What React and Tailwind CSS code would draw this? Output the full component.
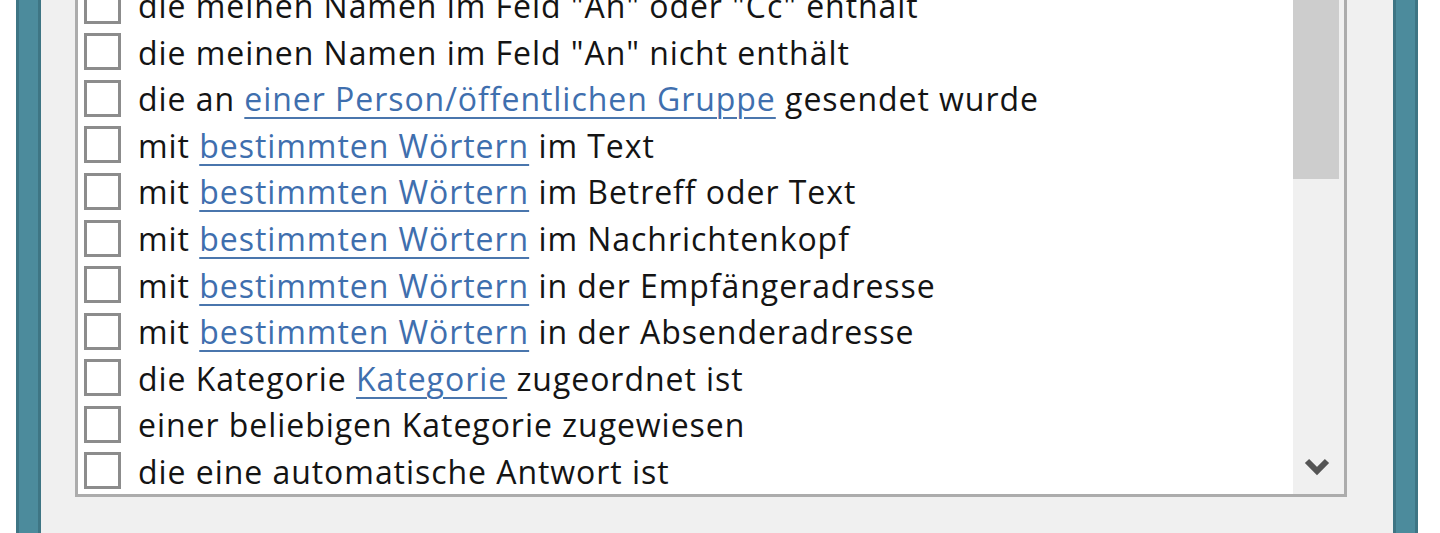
import React from 'react';

const rows = [
  [{ t: 'die meinen Namen im Feld "An" oder "Cc" enthält' }],
  [{ t: 'die meinen Namen im Feld "An" nicht enthält' }],
  [{ t: 'die an ' }, { t: 'einer Person/öffentlichen Gruppe', link: true }, { t: ' gesendet wurde' }],
  [{ t: 'mit ' }, { t: 'bestimmten Wörtern', link: true }, { t: ' im Text' }],
  [{ t: 'mit ' }, { t: 'bestimmten Wörtern', link: true }, { t: ' im Betreff oder Text' }],
  [{ t: 'mit ' }, { t: 'bestimmten Wörtern', link: true }, { t: ' im Nachrichtenkopf' }],
  [{ t: 'mit ' }, { t: 'bestimmten Wörtern', link: true }, { t: ' in der Empfängeradresse' }],
  [{ t: 'mit ' }, { t: 'bestimmten Wörtern', link: true }, { t: ' in der Absenderadresse' }],
  [{ t: 'die Kategorie ' }, { t: 'Kategorie', link: true }, { t: ' zugeordnet ist' }],
  [{ t: 'einer beliebigen Kategorie zugewiesen' }],
  [{ t: 'die eine automatische Antwort ist' }],
];

const Frame = () => (
  <div className="w-[25px] h-full bg-[#4c8b9c] border-x-[3px] border-[#3e7584]" />
);

const Row = ({ parts }) => (
  <div className="h-[46.56px] flex items-center shrink-0">
    <div className="w-[37px] h-[37px] border-[3px] border-[#8c8c8c] bg-white shrink-0" />
    <div className="ml-[17px] pt-[2px] whitespace-nowrap text-[#141414] leading-none">
      {parts.map((p, i) =>
        p.link ? (
          <span key={i} className="text-[#3f6fae] underline decoration-2 underline-offset-[6px] decoration-[#4a76ad]">
            {p.t}
          </span>
        ) : (
          <span key={i} className="whitespace-pre">{p.t}</span>
        )
      )}
    </div>
  </div>
);

export default function App() {
  return (
    <div className="w-[1440px] h-[533px] bg-white flex overflow-hidden" style={{ fontFamily: '"Open Sans", "Noto Sans", sans-serif' }}>
      <div className="w-[16px] h-full" />
      <Frame />
      {/* dialog body */}
      <div className="flex-1 h-full bg-[#f0f0f0] pl-[34px] pr-[46px]">
        <div className="h-[497px] flex border-x-[3px] border-b-[3px] border-[#acacac] bg-white">
          <div className="flex-1 overflow-hidden pl-[6px]">
            <div className="mt-[-18px] flex flex-col text-[32px] tracking-[0.95px]">
              {rows.map((r, i) => (
                <Row key={i} parts={r} />
              ))}
            </div>
          </div>
          {/* scrollbar */}
          <div className="w-[51px] h-full bg-[#f0f0f0] flex flex-col">
            <div className="w-[46px] h-[179px] bg-[#cdcdcd]" />
            <div className="flex-1" />
            <div className="h-[46px] flex items-start justify-center pr-[4px] pt-[8px]">
              <svg width="26" height="22" viewBox="0 0 26 22">
                <polyline points="3,5 13,15 23,5" fill="none" stroke="#555555" strokeWidth="6" />
              </svg>
            </div>
          </div>
        </div>
      </div>
      <Frame />
      <div className="w-[22px] h-full" />
    </div>
  );
}
